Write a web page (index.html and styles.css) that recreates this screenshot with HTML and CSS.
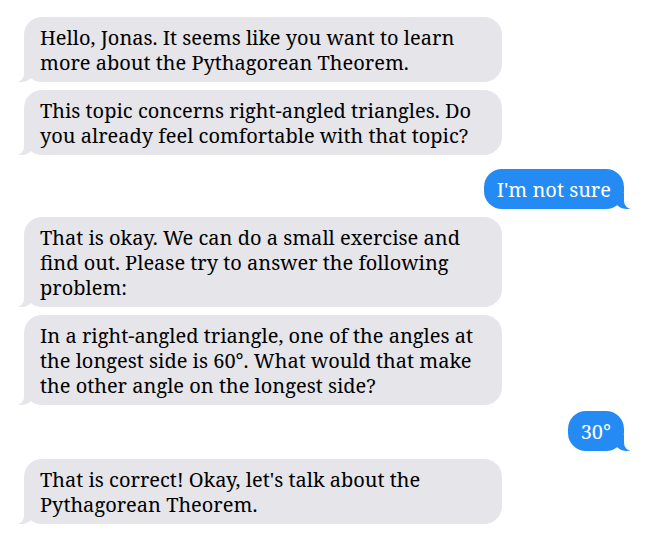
FILE: index.html
```html
<!DOCTYPE html>
<html>
<head>
<meta charset="utf-8">
<link rel="stylesheet" href="styles.css">
</head>
<body>
<div class="chat">
  <p class="msg them">Hello, Jonas. It seems like you want to learn more about the Pythagorean Theorem.</p>
  <p class="msg them">This topic concerns right-angled triangles. Do you already feel comfortable with that topic?</p>
  <p class="msg me gap-before">I'm not sure</p>
  <p class="msg them">That is okay. We can do a small exercise and find out. Please try to answer the following problem:</p>
  <p class="msg them">In a right-angled triangle, one of the angles at the longest side is 60°. What would that make the other angle on the longest side?</p>
  <p class="msg me small-gap">30°</p>
  <p class="msg them">That is correct! Okay, let's talk about the Pythagorean Theorem.</p>
</div>
</body>
</html>
```

FILE: styles.css
```css
html, body {
  margin: 0;
  padding: 0;
  background: #ffffff;
}

.chat {
  display: flex;
  flex-direction: column;
  gap: 8px;
  padding: 17px 26px 0 24px;
  font-family: "Noto Serif", "DejaVu Serif", serif;
  font-size: 20px;
  line-height: 25px;
}

.msg {
  position: relative;
  margin: 0;
  box-sizing: border-box;
  max-width: 478px;
  width: fit-content;
  padding: 7.5px 16px;
  border-radius: 18px;
  word-wrap: break-word;
}

.them {
  align-self: flex-start;
  background: #e5e5ea;
  color: #000;
}

.me {
  align-self: flex-end;
  background: #248bf5;
  color: #fff;
  padding-left: 13px;
  padding-right: 13px;
}

.gap-before {
  margin-top: 6px;
}

.small-gap {
  margin-top: -2px;
}

.msg::before,
.msg::after {
  content: "";
  position: absolute;
  bottom: 0;
  height: 16px;
}

.them::before {
  left: -5.6px;
  border-left: 16px solid #e5e5ea;
  border-bottom-right-radius: 13px 11px;
}

.them::after {
  left: -10px;
  width: 10px;
  background: #fff;
  border-bottom-right-radius: 8px;
}

.me::before {
  right: -5.6px;
  border-right: 16px solid #248bf5;
  border-bottom-left-radius: 13px 11px;
}

.me::after {
  right: -10px;
  width: 10px;
  background: #fff;
  border-bottom-left-radius: 8px;
}
```
